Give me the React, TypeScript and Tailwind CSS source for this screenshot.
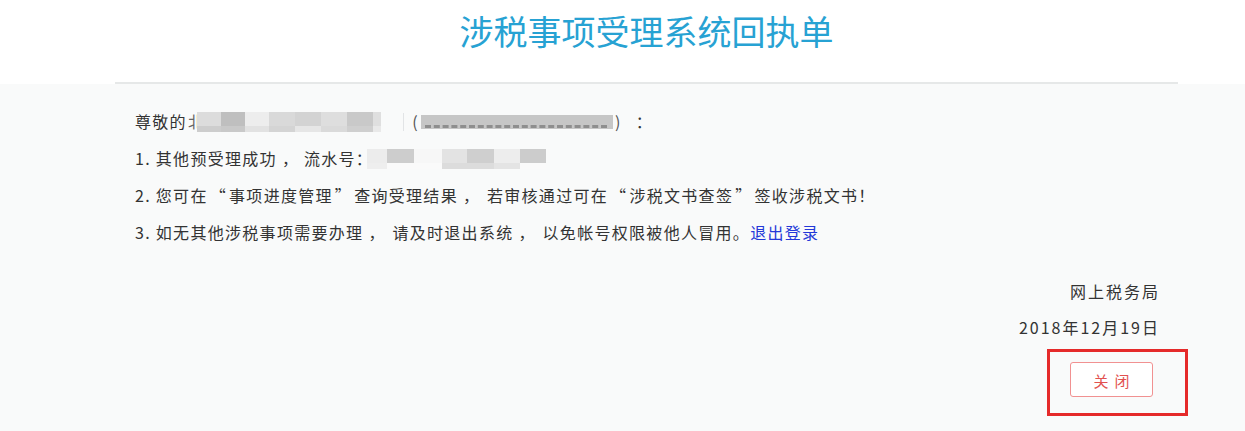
const cjk = { fontFamily: '"Microsoft YaHei", "Noto Sans CJK SC", "Noto Sans", sans-serif' };

// pixelated cover over personal data: each column has a top and a bottom shade
type Cell = { w: number; top: string; bottom: string };

function Mosaic({ cells, className = '' }: { cells: Cell[]; className?: string }) {
    return (
        <span className={`inline-flex h-[20px] ${className}`}>
            {cells.map((c, i) => (
                <span key={i} className="flex flex-col" style={{ width: c.w }}>
                    <span className="h-[14px]" style={{ background: c.top }} />
                    <span className="h-[6px]" style={{ background: c.bottom }} />
                </span>
            ))}
        </span>
    );
}

// the receipt's full-width punctuation sits in wide slots
const Comma = () => <span className="inline-block w-[29px] pl-[5px]">，</span>;
const Q = ({ children }: { children: string }) => <span className="px-[2px]">{children}</span>;

const nameCells: Cell[] = [
    { w: 24, top: '#dcdcdc', bottom: '#cdcdcd' },
    { w: 24, top: '#bfbfbf', bottom: '#c9c9c9' },
    { w: 24, top: '#ededed', bottom: '#e2e2e2' },
    { w: 26, top: '#d9d9d9', bottom: '#d4d4d4' },
    { w: 26, top: '#d3d3d3', bottom: '#e6e6e6' },
    { w: 26, top: '#dedede', bottom: '#dadada' },
    { w: 26, top: '#c9c9c9', bottom: '#cfcfcf' },
    { w: 8, top: '#dfdfdf', bottom: '#e9e9e9' },
];

const serialCells: Cell[] = [
    { w: 20, top: '#ececec', bottom: '#eeeeee' },
    { w: 27, top: '#cdcdcd', bottom: '#fafafa' },
    { w: 28, top: '#f7f7f7', bottom: '#fafafa' },
    { w: 25, top: '#e3e3e3', bottom: '#dcdcdc' },
    { w: 27, top: '#cfcfcf', bottom: '#dcdcdc' },
    { w: 26, top: '#ededed', bottom: '#e4e4e4' },
    { w: 26, top: '#cccccc', bottom: '#fafafa' },
];

export default function App() {
    return (
        <div className="relative h-[431px] w-[1245px] overflow-hidden bg-white text-[#333]" style={cjk}>
            {/* header */}
            <div className="ml-[115px] w-[1063px] border-b-2 border-[#e6e8e8]">
                <h1 className="h-[82px] pt-[10px] text-center text-[34px] leading-[42px] font-normal text-[#27a2d3]">
                    涉税事项受理系统回执单
                </h1>
            </div>

            {/* receipt body */}
            <div className="h-[347px] bg-[#f9fafa]">
                <div className="ml-[115px] flex w-[1063px] flex-col px-5 pt-[19px]">
                    <div className="text-[16px] leading-[37px] tracking-[1.3px]">
                        <p className="flex items-center">
                            <span>尊敬的</span>
                            <span className="ml-[1px] text-[#666]">北</span>
                            <Mosaic cells={nameCells} className="relative -ml-[8px]" />
                            <span className="ml-[22px] h-[18px] w-[1px] bg-[#e2e4e6]" />
                            <span className="ml-[8px] text-[#555]">(</span>
                            <span className="relative mx-[2px] inline-block h-[14px] w-[192px] bg-[#c6c6c6]">
                                <span className="absolute bottom-[1px] left-[4px] right-[6px] h-[3px] border-b-[3px] border-dashed border-[#8e8e8e]" />
                            </span>
                            <span className="text-[#555]">)</span>
                            <span className="ml-[14px]">：</span>
                        </p>
                        <p className="flex items-center">
                            <span>1. 其他预受理成功</span>
                            <Comma />
                            <span className="-ml-[2px]">流水号：</span>
                            <Mosaic cells={serialCells} className="-ml-[6px]" />
                        </p>
                        <p>
                            2. 您可在<Q>“</Q>事项进度管理<Q>”</Q>查询受理结果<Comma />若审核通过可在<Q>“</Q>涉税文书查签<Q>”</Q>签收涉税文书！
                        </p>
                        <p>
                            3. 如无其他涉税事项需要办理<Comma />请及时退出系统<Comma />以免帐号权限被他人冒用。
                            <a className="text-[#2438d8]">退出登录</a>
                        </p>
                    </div>

                    <div className="mt-[22px] -mr-[2px] flex flex-col items-end text-[16px] leading-[36px] tracking-[2px]">
                        <span>网上税务局</span>
                        <span>2018年12月19日</span>
                        <button className="mt-[17px] mr-[7px] h-[35px] w-[83px] rounded-[3px] border border-[#f19191] bg-white pl-[6px] text-[15px] tracking-[6px] text-[#e2514f]">
                            关闭
                        </button>
                    </div>
                </div>
            </div>

            {/* annotation frame around the close button */}
            <div className="absolute left-[1047px] top-[349px] h-[67px] w-[141px] border-[3px] border-[#e52a2a]" />
        </div>
    );
}
